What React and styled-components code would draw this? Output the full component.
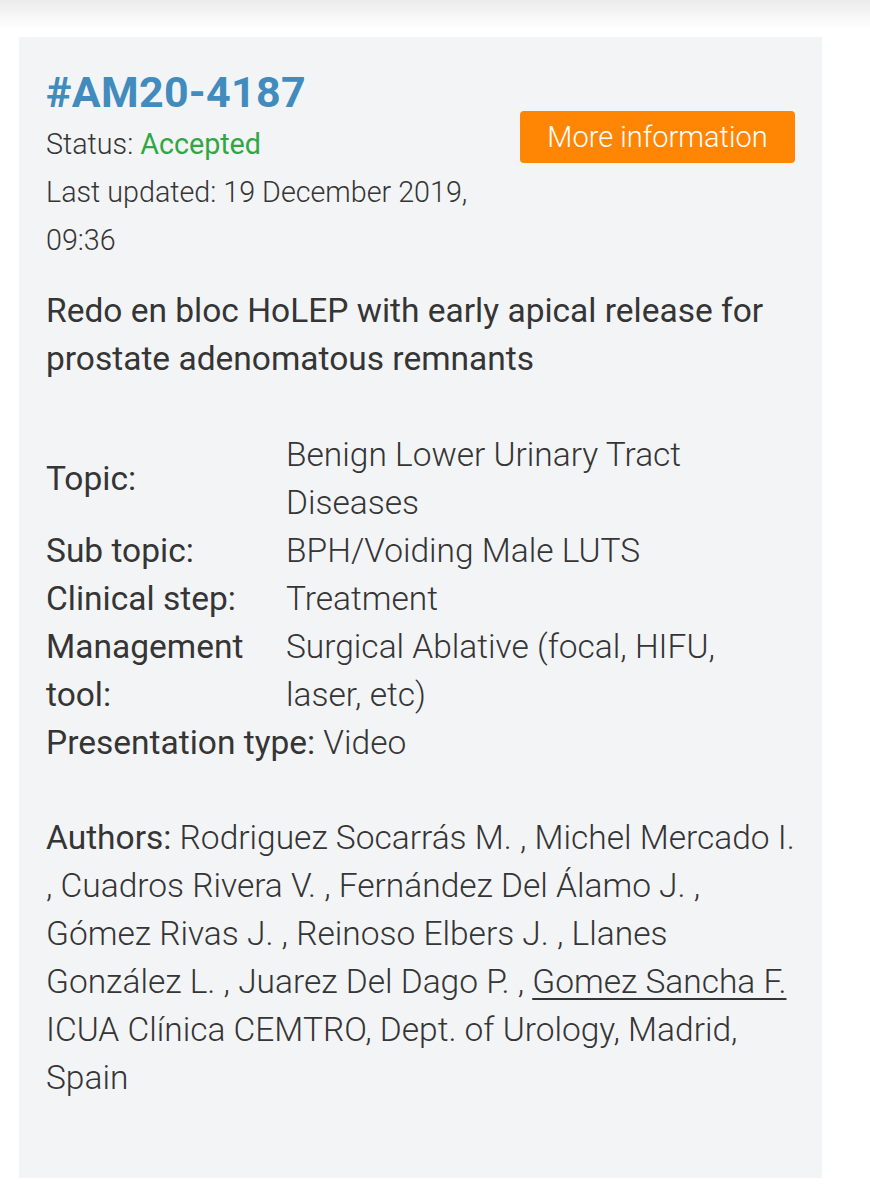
import React from "react";
import styled, { createGlobalStyle } from "styled-components";

const GlobalStyle = createGlobalStyle`
  body {
    margin: 0;
    background: #ffffff;
    font-family: Roboto, "Liberation Sans", sans-serif;
    color: #353535;
  }
`;

const TopShade = styled.div`
  height: 37px;
  background: linear-gradient(#ebebeb, #f7f7f7 45%, #ffffff 80%);
`;

const Card = styled.article`
  box-sizing: border-box;
  width: 803px;
  min-height: 1141px;
  margin-left: 19px;
  background: #f3f4f6;
  padding: 29px 27px 40px;
`;

const Head = styled.div`
  display: flex;
  align-items: flex-start;
  gap: 30px;
`;

const HeadInfo = styled.div`
  flex: 1;
`;

const Code = styled.h1`
  margin: 0 0 2px;
  font-size: 43px;
  line-height: 52px;
  font-weight: 700;
  color: #418bbd;
  letter-spacing: 0.3px;
`;

const Line = styled.p`
  margin: 0;
  font-size: ${(p) => p.$size || 33.5}px;
  line-height: 48px;
  font-weight: 300;
`;

const Label = styled.span`
  font-weight: 400;
`;

const Status = styled.span`
  color: #2fa844;
  font-weight: 400;
`;

const MoreButton = styled.button`
  margin-top: 45px;
  width: 275px;
  height: 52px;
  border: none;
  border-radius: 4px;
  background: #ff8505;
  color: #ffffff;
  font-family: Roboto, "Liberation Sans", sans-serif;
  font-size: 29px;
  font-weight: 300;
  cursor: pointer;
`;

const Title = styled.h2`
  margin: 23px 0 0;
  font-size: 33.5px;
  line-height: 48px;
  font-weight: 400;
  color: #353535;
`;

const Meta = styled.table`
  margin-top: 48px;
  border-collapse: collapse;
  font-size: 33.5px;
  line-height: 48px;
`;

const MetaLabel = styled.th`
  width: 240px;
  padding: 0;
  text-align: left;
  font-weight: 400;
  vertical-align: middle;
`;

const MetaValue = styled.td`
  width: 505px;
  padding: 0;
  font-weight: 300;
  vertical-align: middle;
`;

const Authors = styled(Line)`
  margin-top: 47px;
`;

const Presenter = styled.span`
  text-decoration: underline;
  text-underline-offset: 5px;
  text-decoration-thickness: 2px;
`;

const meta = [
  ["Topic:", "Benign Lower Urinary Tract Diseases"],
  ["Sub topic:", "BPH/Voiding Male LUTS"],
  ["Clinical step:", "Treatment"],
  ["Management tool:", "Surgical Ablative (focal, HIFU, laser, etc)"],
];

export default function App() {
  return (
    <>
      <GlobalStyle />
      <TopShade />
      <Card>
        <Head>
          <HeadInfo>
            <Code>#AM20-4187</Code>
            <Line $size={28.7}>
              Status: <Status>Accepted</Status>
            </Line>
            <Line $size={28.7}>Last updated: 19 December 2019, 09:36</Line>
          </HeadInfo>
          <MoreButton>More information</MoreButton>
        </Head>

        <Title>
          Redo en bloc HoLEP with early apical release for prostate adenomatous
          remnants
        </Title>

        <Meta>
          <tbody>
            {meta.map(([k, v]) => (
              <tr key={k}>
                <MetaLabel>{k}</MetaLabel>
                <MetaValue>{v}</MetaValue>
              </tr>
            ))}
          </tbody>
        </Meta>
        <Line>
          <Label>Presentation type:</Label> Video
        </Line>

        <Authors>
          <Label>Authors:</Label> Rodriguez Socarrás M. , Michel Mercado I. ,
          Cuadros Rivera V. , Fernández Del Álamo J. , Gómez Rivas J. , Reinoso
          Elbers J. , Llanes González L. , Juarez Del Dago P. ,{" "}
          <Presenter>Gomez Sancha F.</Presenter>
          <br />
          ICUA Clínica CEMTRO, Dept. of Urology, Madrid, Spain
        </Authors>
      </Card>
    </>
  );
}
